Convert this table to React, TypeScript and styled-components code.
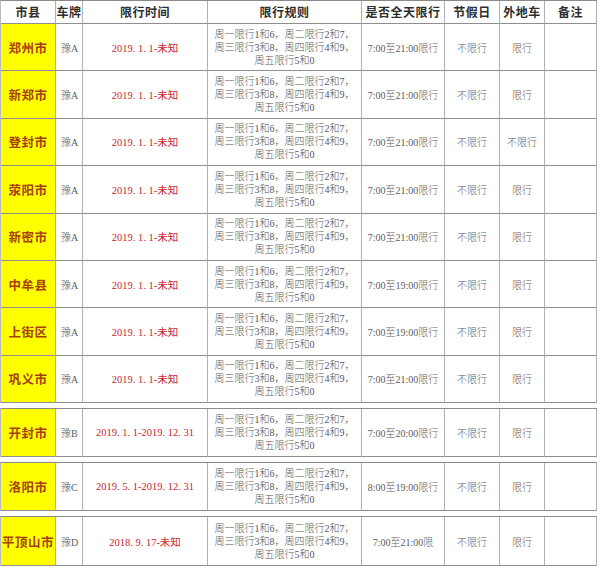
import React from "react";
import styled, { createGlobalStyle, css } from "styled-components";

const Global = createGlobalStyle`
  html, body { margin: 0; padding: 0; background: #ffffff; }
  body { font-family: "Liberation Serif", "Noto Sans CJK SC", serif; }
`;

const COLS = "55px 27px 125px 154px 83px 55px 45px 52px";

const Page = styled.div`
  width: 600px;
  height: 568px;
  display: flex;
  flex-direction: column;
  gap: 5px;
  overflow: hidden;
  background: #fff;
`;

const Section = styled.div<{ $rows: string }>`
  width: 597px;
  display: grid;
  grid-template-columns: ${COLS};
  grid-template-rows: ${(p) => p.$rows};
  border-top: 1px solid #8a8a8a;
  border-left: 1px solid #bbbbbb;
  box-sizing: border-box;
`;

type Tone = "head" | "city" | "date" | "plain";

const Cell = styled.div<{ $tone?: Tone }>`
  box-sizing: border-box;
  border-right: 1px solid #b0b0b0;
  border-bottom: 1px solid #8f8f8f;
  display: flex;
  align-items: center;
  justify-content: center;
  text-align: center;
  color: #5c5c5c;
  font-size: 10px;
  font-weight: 300;
  white-space: nowrap;
  overflow: hidden;
  ${(p) =>
    p.$tone === "head" &&
    css`
      color: #2e2e2e;
      font-weight: 600;
      font-size: 12px;
      letter-spacing: 0.5px;
    `}
  ${(p) =>
    p.$tone === "city" &&
    css`
      background: #ffff00;
      color: #a8400e;
      font-weight: 600;
      font-size: 12.5px;
      letter-spacing: 0.5px;
    `}
  ${(p) =>
    p.$tone === "date" &&
    css`
      color: #c8262e;
      font-size: 10.5px;
      font-weight: 400;
    `}
`;

const Plate = styled(Cell)`
  justify-content: flex-start;
  padding-left: 5px;
`;

const RuleText = styled.div`
  white-space: pre-line;
  line-height: 13px;
  font-size: 10px;
  font-weight: 300;
  color: #555555;
  text-align: center;
`;

type Row = {
  city: string;
  plate: string;
  period: string;
  hours: string;
  foreign: string;
};

const RULE = "周一限行1和6，周二限行2和7，\n周三限行3和8，周四限行4和9，\n周五限行5和0";

const mainRows: Row[] = [
  { city: "郑州市", plate: "豫A", period: "2019. 1. 1-未知", hours: "7:00至21:00限行", foreign: "限行" },
  { city: "新郑市", plate: "豫A", period: "2019. 1. 1-未知", hours: "7:00至21:00限行", foreign: "限行" },
  { city: "登封市", plate: "豫A", period: "2019. 1. 1-未知", hours: "7:00至21:00限行", foreign: "不限行" },
  { city: "荥阳市", plate: "豫A", period: "2019. 1. 1-未知", hours: "7:00至21:00限行", foreign: "限行" },
  { city: "新密市", plate: "豫A", period: "2019. 1. 1-未知", hours: "7:00至21:00限行", foreign: "限行" },
  { city: "中牟县", plate: "豫A", period: "2019. 1. 1-未知", hours: "7:00至19:00限行", foreign: "限行" },
  { city: "上街区", plate: "豫A", period: "2019. 1. 1-未知", hours: "7:00至19:00限行", foreign: "限行" },
  { city: "巩义市", plate: "豫A", period: "2019. 1. 1-未知", hours: "7:00至21:00限行", foreign: "限行" },
];

const extraRows: { row: Row; height: string }[] = [
  { row: { city: "开封市", plate: "豫B", period: "2019. 1. 1-2019. 12. 31", hours: "7:00至20:00限行", foreign: "限行" }, height: "48px" },
  { row: { city: "洛阳市", plate: "豫C", period: "2019. 5. 1-2019. 12. 31", hours: "8:00至19:00限行", foreign: "限行" }, height: "48px" },
  { row: { city: "平顶山市", plate: "豫D", period: "2018. 9. 17-未知", hours: "7:00至21:00限", foreign: "限行" }, height: "49px" },
];

const headers = ["市县", "车牌", "限行时间", "限行规则", "是否全天限行", "节假日", "外地车", "备注"];

const DataRow: React.FC<{ row: Row }> = ({ row }) => (
  <>
    <Cell $tone="city">{row.city}</Cell>
    <Plate>{row.plate}</Plate>
    <Cell $tone="date">{row.period}</Cell>
    <Cell>
      <RuleText>{RULE}</RuleText>
    </Cell>
    <Cell>{row.hours}</Cell>
    <Cell>不限行</Cell>
    <Cell>{row.foreign}</Cell>
    <Cell />
  </>
);

export default function App() {
  return (
    <>
      <Global />
      <Page>
        <Section $rows="23px repeat(8, 47.4px)">
          {headers.map((h) => (
            <Cell key={h} $tone="head">
              {h}
            </Cell>
          ))}
          {mainRows.map((r) => (
            <DataRow key={r.city} row={r} />
          ))}
        </Section>
        {extraRows.map(({ row, height }) => (
          <Section key={row.city} $rows={height}>
            <DataRow row={row} />
          </Section>
        ))}
      </Page>
    </>
  );
}
